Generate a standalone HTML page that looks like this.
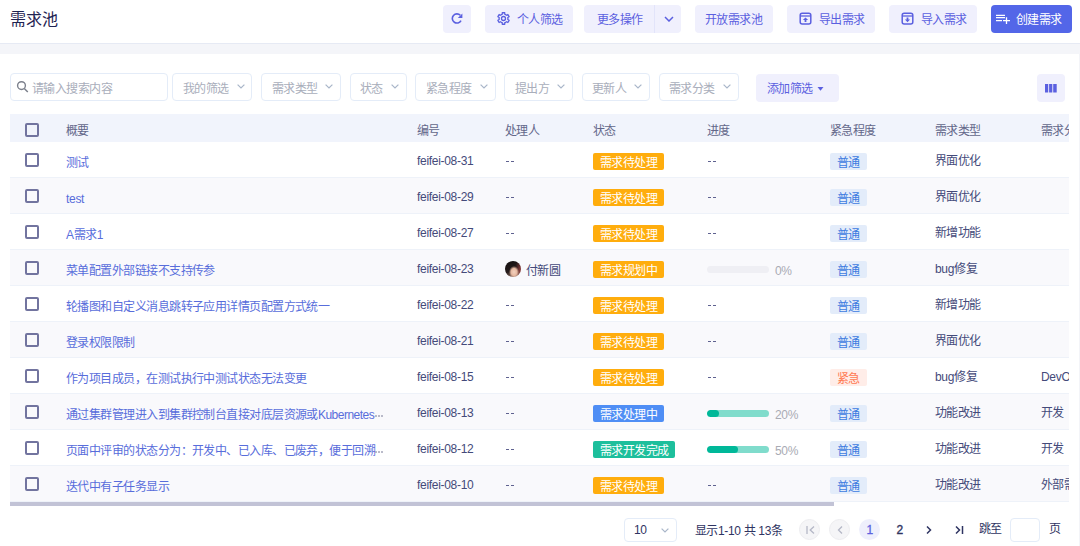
<!DOCTYPE html>
<html lang="zh-CN"><head><meta charset="utf-8">
<style>
*{box-sizing:border-box;margin:0;padding:0}
html,body{width:1080px;height:546px;overflow:hidden;background:#fff;font-family:"Liberation Sans",sans-serif;}
svg{position:absolute;display:block}
#hdr{position:absolute;left:0;top:0;width:1080px;height:44px;background:#fff;border-bottom:1px solid #e6eaf4}
#band{position:absolute;left:0;top:44px;width:1080px;height:10px;background:#f4f5f9}
.title{position:absolute;left:10px;top:9px;font-size:16px;line-height:22px;color:#1f2352}
.btn{position:absolute;top:5px;height:28px;background:#f0f0fd;border-radius:4px;color:#5b60e0;font-size:12px;letter-spacing:-0.55px;line-height:28px;white-space:nowrap}
.btn span{position:absolute;top:1px}
.fsel{position:absolute;top:73px;height:28px;border:1px solid #e4ecf8;border-radius:4px;background:#fff;color:#a9aebb;font-size:12px;letter-spacing:-0.55px;line-height:26px;white-space:nowrap}
.fsel span{position:absolute;top:2px}
.chev{top:10px}
#thead{position:absolute;left:10px;top:114px;width:1059px;height:28px;background:#f1f4fc}
.th{position:absolute;top:116px;height:28px;line-height:30px;font-size:12px;letter-spacing:-0.55px;color:#63678a;white-space:nowrap}
.row{position:absolute;left:10px;width:1059px;height:36px;border-bottom:1px solid #eef2f9}
.cb{position:absolute;left:25px;width:14px;height:14px;border:2px solid #72749f;border-radius:2px}
.cell{position:absolute;height:36px;line-height:39px;font-size:12px;letter-spacing:-0.55px;color:#444a7a;white-space:nowrap}
.sum{color:#586ddb;line-height:42px}
.ell{position:absolute;width:2px;height:2px;border-radius:1px;background:#a3a5b8;box-shadow:3px 0 0 #a3a5b8,6px 0 0 #a3a5b8}
.dd{position:absolute;width:3px;height:1px;background:#5f6290;box-shadow:5px 0 0 #5f6290}
.pct{color:#a9abb4;line-height:42px}
.lat{line-height:39px}
.L{font-size:12px;letter-spacing:-0.3px}
.tag{position:absolute;height:17px;line-height:20px;overflow:hidden;padding:0 6.5px 0 7px;font-size:12px;letter-spacing:-0.55px;color:#fff;border-radius:2px;white-space:nowrap}
.ty{background:#ffad0d}.tb{background:#4f8ef5}.tg{background:#1dbf9c}
.utag{position:absolute;height:17px;line-height:20px;overflow:hidden;padding:0 7px;font-size:12px;letter-spacing:-0.55px;border-radius:2px;white-space:nowrap;width:37px}
.un{background:#e3ecfa;color:#3d7be0}.uu{background:#ffede8;color:#ff7a52}
.pbar{position:absolute;width:62px;height:7px;border-radius:4px;overflow:hidden}
.pbar div{height:7px;background:#00b899;border-radius:4px}
.av{position:absolute;width:16px;height:16px;border-radius:50%;overflow:hidden;background:radial-gradient(ellipse 5px 6px at 9px 11px,#f3d2c0 0,#e6b8a0 60%,rgba(230,184,160,0) 100%),radial-gradient(ellipse 6px 10px at 16px 8px,#8c3a3a 0,rgba(140,58,58,0) 100%),linear-gradient(160deg,#141010 0,#241a1a 55%,#c89a88 100%)}
.pg{position:absolute;font-size:12px;letter-spacing:-0.55px;color:#2f3462;white-space:nowrap;line-height:16px}
.circ{position:absolute;top:519px;width:21px;height:21px;border-radius:50%}
</style></head><body>
<div id="hdr"></div>
<div id="band"></div>
<div class="title">需求池</div>

<!-- header buttons -->
<div class="btn" style="left:443px;width:28px">
 <svg style="left:8px;top:8px" width="12" height="12" viewBox="0 0 12 12"><path d="M10 7.6A4.6 4.6 0 1 1 9.3 2.3" fill="none" stroke="#5b60e0" stroke-width="1.6"/><path d="M6.8 5L11.4 5L11.4 0.4Z" fill="#5b60e0"/></svg>
</div>
<div class="btn" style="left:485px;width:88px">
 <svg style="left:12px;top:7px" width="13" height="13" viewBox="0 0 13 13"><path d="M4.30 2.69 L5.21 2.29 L5.27 0.73 L7.73 0.73 L7.79 2.29 L8.70 2.69 L9.50 3.28 L10.88 2.55 L12.11 4.68 L10.79 5.51 L10.90 6.50 L10.79 7.49 L12.11 8.32 L10.88 10.45 L9.50 9.72 L8.70 10.31 L7.79 10.71 L7.73 12.27 L5.27 12.27 L5.21 10.71 L4.30 10.31 L3.50 9.72 L2.12 10.45 L0.89 8.32 L2.21 7.49 L2.10 6.50 L2.21 5.51 L0.89 4.68 L2.12 2.55 L3.50 3.28Z" fill="none" stroke="#5b60e0" stroke-width="1.3" stroke-linejoin="round"/><circle cx="6.5" cy="6.5" r="2.0" fill="none" stroke="#5b60e0" stroke-width="1.3"/></svg>
 <span style="left:32px">个人筛选</span></div>
<div class="btn" style="left:584px;width:97px"><span style="left:13px">更多操作</span>
 <div style="position:absolute;left:70px;top:0;width:1px;height:28px;background:#e2e4fa"></div>
 <svg style="left:80px;top:11px" width="10" height="6" viewBox="0 0 10 6"><path d="M1 1L5 5L9 1" fill="none" stroke="#5b60e0" stroke-width="1.5"/></svg>
</div>
<div class="btn" style="left:695px;width:78px"><span style="left:10px">开放需求池</span></div>
<div class="btn" style="left:787px;width:88px">
 <svg style="left:12px;top:7px" width="13" height="13" viewBox="0 0 13 13"><rect x="1.2" y="1.3" width="10.6" height="10.8" rx="2" fill="none" stroke="#5b60e0" stroke-width="1.5"/><line x1="1.2" y1="4.0" x2="11.8" y2="4.0" stroke="#5b60e0" stroke-width="1.3"/><path d="M6.5 5.6L9.1 8.1L7.4 8.1L7.4 10L5.6 10L5.6 8.1L3.9 8.1Z" fill="#5b60e0"/></svg>
 <span style="left:32px">导出需求</span></div>
<div class="btn" style="left:889px;width:88px">
 <svg style="left:12px;top:7px" width="13" height="13" viewBox="0 0 13 13"><rect x="1.2" y="1.3" width="10.6" height="10.8" rx="2" fill="none" stroke="#5b60e0" stroke-width="1.5"/><line x1="1.2" y1="4.0" x2="11.8" y2="4.0" stroke="#5b60e0" stroke-width="1.3"/><path d="M6.5 10.2L9.1 7.6L7.4 7.6L7.4 5.6L5.6 5.6L5.6 7.6L3.9 7.6Z" fill="#5b60e0"/></svg>
 <span style="left:32px">导入需求</span></div>
<div class="btn" style="left:991px;width:81px;background:#5366e8;color:#fff">
 <svg style="left:5px;top:9px" width="15" height="11" viewBox="0 0 15 11"><path d="M0 1.4H9M0 3.7H9M0 6.6H6M7 6.6H14M10.5 3.2V10" fill="none" stroke="#fff" stroke-width="1.3"/></svg>
 <span style="left:25px">创建需求</span></div>

<!-- filters -->
<div class="fsel" style="left:10px;width:158px">
 <svg style="left:5px;top:6px" width="13" height="13" viewBox="0 0 13 13"><circle cx="5.5" cy="5.6" r="3.9" fill="none" stroke="#7c808c" stroke-width="1.4"/><path d="M8.3 8.5L11.8 12" stroke="#7c808c" stroke-width="1.5"/></svg>
 <span style="left:21px">请输入搜索内容</span></div>
<div class="fsel" style="left:172px;width:80px"><span style="left:10px">我的筛选</span><svg class="chev" style="left:64px" width="8" height="5" viewBox="0 0 8 5"><path d="M0.6 0.6L4 4L7.4 0.6" fill="none" stroke="#a9b6c9" stroke-width="1.2"/></svg></div>
<div class="fsel" style="left:261px;width:80px"><span style="left:10px">需求类型</span><svg class="chev" style="left:63px" width="8" height="5" viewBox="0 0 8 5"><path d="M0.6 0.6L4 4L7.4 0.6" fill="none" stroke="#a9b6c9" stroke-width="1.2"/></svg></div>
<div class="fsel" style="left:350px;width:57px"><span style="left:9px">状态</span><svg class="chev" style="left:40px" width="8" height="5" viewBox="0 0 8 5"><path d="M0.6 0.6L4 4L7.4 0.6" fill="none" stroke="#a9b6c9" stroke-width="1.2"/></svg></div>
<div class="fsel" style="left:415px;width:81px"><span style="left:10px">紧急程度</span><svg class="chev" style="left:64px" width="8" height="5" viewBox="0 0 8 5"><path d="M0.6 0.6L4 4L7.4 0.6" fill="none" stroke="#a9b6c9" stroke-width="1.2"/></svg></div>
<div class="fsel" style="left:504px;width:69px"><span style="left:10px">提出方</span><svg class="chev" style="left:52px" width="8" height="5" viewBox="0 0 8 5"><path d="M0.6 0.6L4 4L7.4 0.6" fill="none" stroke="#a9b6c9" stroke-width="1.2"/></svg></div>
<div class="fsel" style="left:582px;width:68px"><span style="left:9px">更新人</span><svg class="chev" style="left:51px" width="8" height="5" viewBox="0 0 8 5"><path d="M0.6 0.6L4 4L7.4 0.6" fill="none" stroke="#a9b6c9" stroke-width="1.2"/></svg></div>
<div class="fsel" style="left:659px;width:80px"><span style="left:9px">需求分类</span><svg class="chev" style="left:63px" width="8" height="5" viewBox="0 0 8 5"><path d="M0.6 0.6L4 4L7.4 0.6" fill="none" stroke="#a9b6c9" stroke-width="1.2"/></svg></div>
<div class="btn" style="left:756px;top:74px;width:83px"><span style="left:11px">添加筛选</span>
 <svg style="left:61px;top:13px" width="7" height="4" viewBox="0 0 7 4"><path d="M0.5 0L6.5 0L3.5 3.8Z" fill="#5b60e0"/></svg></div>
<div class="btn" style="left:1037px;top:74px;width:28px">
 <svg style="left:8px;top:10px" width="12" height="9" viewBox="0 0 12 9"><rect x="0" y="0" width="3.2" height="8.5" fill="#5b60e0"/><rect x="4.1" y="0" width="3.2" height="8.5" fill="#5b60e0"/><rect x="8.2" y="0" width="3.5" height="8.5" fill="#5b60e0"/></svg>
</div>

<div id="tbl" style="position:absolute;left:0;top:0;width:1069px;height:546px;overflow:hidden">
<!-- table -->
<div id="thead"></div>
<div class="cb" style="top:123px"></div>
<div class="th" style="left:66px">概要</div>
<div class="th" style="left:417px">编号</div>
<div class="th" style="left:505px">处理人</div>
<div class="th" style="left:593px">状态</div>
<div class="th" style="left:707px">进度</div>
<div class="th" style="left:830px">紧急程度</div>
<div class="th" style="left:935px">需求类型</div>
<div class="th" style="left:1041px;width:28px;overflow:hidden">需求分类</div>
<div class="row" style="top:142px;background:#fff"></div><div class="cb" style="top:153px"></div><div class="cell sum" style="left:66px;top:142px">测试</div><div class="cell lat" style="left:417px;top:142px"><span class="L">feifei-08-31</span></div><div class="dd" style="left:506px;top:161px"></div><div class="tag ty" style="left:593px;top:153px">需求待处理</div><div class="dd" style="left:708px;top:161px"></div><div class="utag un" style="left:830px;top:153px">普通</div><div class="cell" style="left:935px;top:142px">界面优化</div>
<div class="row" style="top:178px;background:#f9f9fc"></div><div class="cb" style="top:189px"></div><div class="cell sum" style="left:66px;top:178px"><span class="L">test</span></div><div class="cell lat" style="left:417px;top:178px"><span class="L">feifei-08-29</span></div><div class="dd" style="left:506px;top:197px"></div><div class="tag ty" style="left:593px;top:189px">需求待处理</div><div class="dd" style="left:708px;top:197px"></div><div class="utag un" style="left:830px;top:189px">普通</div><div class="cell" style="left:935px;top:178px">界面优化</div>
<div class="row" style="top:214px;background:#fff"></div><div class="cb" style="top:225px"></div><div class="cell sum" style="left:66px;top:214px"><span class="L">A</span>需求<span class="L">1</span></div><div class="cell lat" style="left:417px;top:214px"><span class="L">feifei-08-27</span></div><div class="dd" style="left:506px;top:233px"></div><div class="tag ty" style="left:593px;top:225px">需求待处理</div><div class="dd" style="left:708px;top:233px"></div><div class="utag un" style="left:830px;top:225px">普通</div><div class="cell" style="left:935px;top:214px">新增功能</div>
<div class="row" style="top:250px;background:#f9f9fc"></div><div class="cb" style="top:261px"></div><div class="cell sum" style="left:66px;top:250px">菜单配置外部链接不支持传参</div><div class="cell lat" style="left:417px;top:250px"><span class="L">feifei-08-23</span></div><div class="av" style="left:505px;top:261px"></div><div class="cell" style="left:526px;top:250px;line-height:42px">付新圆</div><div class="tag ty" style="left:593px;top:261px">需求规划中</div><div class="pbar" style="left:707px;top:266px;background:#efeff4"></div><div class="cell pct" style="left:775px;top:250px"><span class="L">0%</span></div><div class="utag un" style="left:830px;top:261px">普通</div><div class="cell" style="left:935px;top:250px"><span class="L">bug</span>修复</div>
<div class="row" style="top:286px;background:#fff"></div><div class="cb" style="top:297px"></div><div class="cell sum" style="left:66px;top:286px">轮播图和自定义消息跳转子应用详情页配置方式统一</div><div class="cell lat" style="left:417px;top:286px"><span class="L">feifei-08-22</span></div><div class="dd" style="left:506px;top:305px"></div><div class="tag ty" style="left:593px;top:297px">需求待处理</div><div class="dd" style="left:708px;top:305px"></div><div class="utag un" style="left:830px;top:297px">普通</div><div class="cell" style="left:935px;top:286px">新增功能</div>
<div class="row" style="top:322px;background:#f9f9fc"></div><div class="cb" style="top:333px"></div><div class="cell sum" style="left:66px;top:322px">登录权限限制</div><div class="cell lat" style="left:417px;top:322px"><span class="L">feifei-08-21</span></div><div class="dd" style="left:506px;top:341px"></div><div class="tag ty" style="left:593px;top:333px">需求待处理</div><div class="dd" style="left:708px;top:341px"></div><div class="utag un" style="left:830px;top:333px">普通</div><div class="cell" style="left:935px;top:322px">界面优化</div>
<div class="row" style="top:358px;background:#fff"></div><div class="cb" style="top:369px"></div><div class="cell sum" style="left:66px;top:358px">作为项目成员，在测试执行中测试状态无法变更</div><div class="cell lat" style="left:417px;top:358px"><span class="L">feifei-08-15</span></div><div class="dd" style="left:506px;top:377px"></div><div class="tag ty" style="left:593px;top:369px">需求待处理</div><div class="dd" style="left:708px;top:377px"></div><div class="utag uu" style="left:830px;top:369px">紧急</div><div class="cell" style="left:935px;top:358px"><span class="L">bug</span>修复</div><div class="cell" style="left:1041px;top:358px"><span class="L">DevOps</span></div>
<div class="row" style="top:394px;background:#f9f9fc"></div><div class="cb" style="top:405px"></div><div class="cell sum" style="left:66px;top:394px">通过集群管理进入到集群控制台直接对底层资源或<span class="L" style="letter-spacing:-0.5px">Kubernetes</span></div><div class="ell" style="left:375px;top:415px"></div><div class="cell lat" style="left:417px;top:394px"><span class="L">feifei-08-13</span></div><div class="dd" style="left:506px;top:413px"></div><div class="tag tb" style="left:593px;top:405px">需求处理中</div><div class="pbar" style="left:707px;top:410px;background:#80dccc"><div style="width:12px"></div></div><div class="cell pct" style="left:775px;top:394px"><span class="L">20%</span></div><div class="utag un" style="left:830px;top:405px">普通</div><div class="cell" style="left:935px;top:394px">功能改进</div><div class="cell" style="left:1041px;top:394px">开发</div>
<div class="row" style="top:430px;background:#fff"></div><div class="cb" style="top:441px"></div><div class="cell sum" style="left:66px;top:430px">页面中评审的状态分为：开发中、已入库、已废弃，便于回溯</div><div class="ell" style="left:375px;top:451px"></div><div class="cell lat" style="left:417px;top:430px"><span class="L">feifei-08-12</span></div><div class="dd" style="left:506px;top:449px"></div><div class="tag tg" style="left:593px;top:441px">需求开发完成</div><div class="pbar" style="left:707px;top:446px;background:#80dccc"><div style="width:31px"></div></div><div class="cell pct" style="left:775px;top:430px"><span class="L">50%</span></div><div class="utag un" style="left:830px;top:441px">普通</div><div class="cell" style="left:935px;top:430px">功能改进</div><div class="cell" style="left:1041px;top:430px">开发</div>
<div class="row" style="top:466px;background:#f9f9fc"></div><div class="cb" style="top:477px"></div><div class="cell sum" style="left:66px;top:466px">迭代中有子任务显示</div><div class="cell lat" style="left:417px;top:466px"><span class="L">feifei-08-10</span></div><div class="dd" style="left:506px;top:485px"></div><div class="tag ty" style="left:593px;top:477px">需求待处理</div><div class="dd" style="left:708px;top:485px"></div><div class="utag un" style="left:830px;top:477px">普通</div><div class="cell" style="left:935px;top:466px">功能改进</div><div class="cell" style="left:1041px;top:466px">外部需求</div>
</div>
<div style="position:absolute;left:10px;top:502px;width:824px;height:4px;background:#c2c3d6"></div>

<!-- pagination -->
<div style="position:absolute;left:624px;top:518px;width:53px;height:24px;border:1px solid #e4ecf8;border-radius:4px"></div>
<div class="pg" style="left:634px;top:522px"><span class="L">10</span></div>
<svg style="left:661px;top:528px" width="8" height="5" viewBox="0 0 8 5"><path d="M0.6 0.6L4 4L7.4 0.6" fill="none" stroke="#a9b6c9" stroke-width="1.2"/></svg>
<div class="pg" style="left:695px;top:523px">显示<span class="L">1-10 </span>共<span class="L"> 13</span>条</div>
<div class="circ" style="left:799px;background:#f5f5f7;border:1px solid #ededf0"></div>
<svg style="left:806px;top:526px" width="9" height="8" viewBox="0 0 9 8"><path d="M1 0V8" stroke="#b4b7c6" stroke-width="1.3"/><path d="M8 0.5L4.2 4L8 7.5" fill="none" stroke="#b4b7c6" stroke-width="1.3"/></svg>
<div class="circ" style="left:829px;background:#f5f5f7;border:1px solid #ededf0"></div>
<svg style="left:837px;top:526px" width="6" height="8" viewBox="0 0 6 8"><path d="M5 0.5L1.5 4L5 7.5" fill="none" stroke="#b4b7c6" stroke-width="1.3"/></svg>
<div class="circ" style="left:859px;background:#eeeffc"></div>
<div class="pg" style="left:866.5px;top:522px;color:#5c63e0;-webkit-text-stroke:0.3px #5c63e0"><span class="L">1</span></div>
<div class="pg" style="left:896.5px;top:522px;-webkit-text-stroke:0.35px #2f3462"><span class="L">2</span></div>
<svg style="left:926px;top:526px" width="6" height="8" viewBox="0 0 6 8"><path d="M1 0.5L4.5 4L1 7.5" fill="none" stroke="#2f3462" stroke-width="1.5"/></svg>
<svg style="left:955px;top:526px" width="9" height="8" viewBox="0 0 9 8"><path d="M1 0.5L4.5 4L1 7.5" fill="none" stroke="#2f3462" stroke-width="1.5"/><path d="M7.5 0V8" stroke="#2f3462" stroke-width="1.5"/></svg>
<div class="pg" style="left:979px;top:521px">跳至</div>
<div style="position:absolute;left:1010px;top:518px;width:30px;height:24px;border:1px solid #e4ecf8;border-radius:4px"></div>
<div class="pg" style="left:1049px;top:521px">页</div>
<div style="position:absolute;left:1079px;top:54px;width:1px;height:492px;background:#f3f4f8"></div>
</body></html>
